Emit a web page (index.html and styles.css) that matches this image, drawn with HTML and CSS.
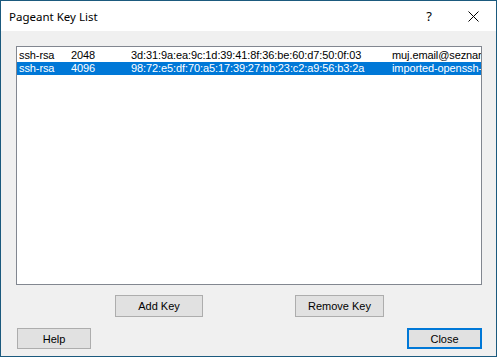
FILE: index.html
```html
<!DOCTYPE html>
<html lang="en">
<head>
    <meta charset="UTF-8">
    <title>Pageant Key List</title>
    <link rel="stylesheet" href="styles.css">
</head>
<body>
    <div class="window">
        <div class="titlebar">
            <span class="title">Pageant Key List</span>
            <span class="title-help">?</span>
            <span class="title-close">
                <svg width="11" height="11" viewBox="0 0 11 11">
                    <path d="M0.5 0.5 L10.5 10.5 M10.5 0.5 L0.5 10.5" stroke="#000" stroke-width="1" fill="none"/>
                </svg>
            </span>
        </div>

        <div class="client">
            <div class="key-list">
                <div class="key-row">
                    <span>ssh-rsa</span>
                    <span>2048</span>
                    <span>3d:31:9a:ea:9c:1d:39:41:8f:36:be:60:d7:50:0f:03</span>
                    <span>muj.email@seznam.cz</span>
                </div>
                <div class="key-row selected">
                    <span>ssh-rsa</span>
                    <span>4096</span>
                    <span>98:72:e5:df:70:a5:17:39:27:bb:23:c2:a9:56:b3:2a</span>
                    <span>imported-openssh-key</span>
                </div>
            </div>

            <div class="key-buttons">
                <button class="btn btn-add">Add Key</button>
                <button class="btn btn-remove">Remove Key</button>
            </div>

            <div class="dialog-buttons">
                <button class="btn btn-help">Help</button>
                <button class="btn btn-close default">Close</button>
            </div>
        </div>
    </div>
</body>
</html>
```

FILE: styles.css
```css
* {
    box-sizing: border-box;
}

body {
    margin: 0;
    background: #ffffff;
}

.window {
    width: 497px;
    height: 357px;
    border: 1px solid #1b5a7e;
    display: flex;
    flex-direction: column;
    font-family: "Liberation Sans", Arial, sans-serif;
}

/* Title bar */
.titlebar {
    height: 30px;
    background: #ffffff;
    display: flex;
    align-items: center;
    padding-left: 8px;
}

.title {
    flex: 1;
    font-family: "Noto Sans", sans-serif;
    font-size: 11.5px;
    color: #000;
}

.title-help {
    font-family: "Noto Sans", sans-serif;
    font-size: 13px;
    margin-right: 36px;
    color: #000;
}

.title-close {
    display: flex;
    margin-right: 17px;
    margin-top: 1px;
}

/* Client area */
.client {
    flex: 1;
    background: #f0f0f0;
    padding: 15px 14px 0 15px;
    display: flex;
    flex-direction: column;
}

.key-list {
    height: 239px;
    background: #ffffff;
    border: 1px solid #828790;
    padding-top: 2px;
    overflow: hidden;
}

.key-row {
    display: grid;
    grid-template-columns: 52px 60px 261px 1fr;
    height: 13px;
    line-height: 13px;
    padding-left: 2px;
    font-size: 11px;
    letter-spacing: -0.1px;
    color: #000;
    white-space: nowrap;
    overflow: hidden;
}

.key-row span {
    overflow: hidden;
}

.key-row.selected {
    background: #0078d7;
    color: #ffffff;
}

/* Buttons */
.btn {
    font-family: "Liberation Sans", Arial, sans-serif;
    font-size: 11px;
    color: #000;
    background: #e1e1e1;
    border: 1px solid #adadad;
    padding: 0;
    margin: 0;
}

.btn.default {
    border: 2px solid #0078d7;
}

.key-buttons {
    display: flex;
    gap: 92px;
    padding-left: 99px;
    margin-top: 10px;
}

.btn-add {
    width: 88px;
    height: 22px;
}

.btn-remove {
    width: 89px;
    height: 22px;
}

.dialog-buttons {
    display: flex;
    justify-content: space-between;
    margin-top: 11px;
    padding-left: 1px;
}

.btn-help {
    width: 74px;
    height: 21px;
}

.btn-close {
    width: 75px;
    height: 21px;
}
```
